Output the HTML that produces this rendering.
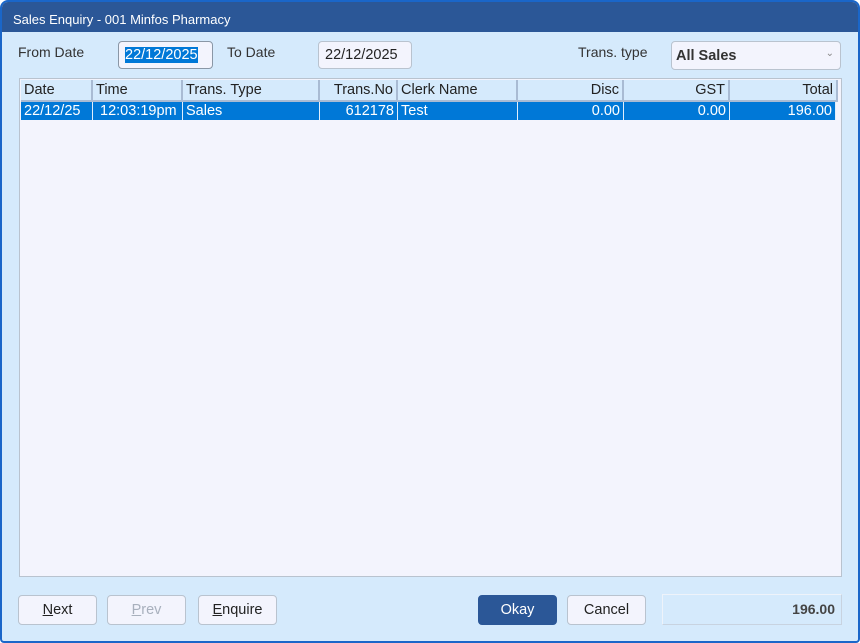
<!DOCTYPE html>
<html><head><style>
*{margin:0;padding:0;box-sizing:border-box}
body{width:860px;height:643px;background:#fff;font-family:"Liberation Sans",Arial,sans-serif;position:relative;overflow:hidden}
.win{position:absolute;left:0;top:0;width:860px;height:643px;border:2px solid #1a66c9;border-radius:8px 8px 4px 4px;background:#d5eafc;overflow:hidden}
.title{position:absolute;left:0;top:0;width:856px;height:30px;background:#2b5797;color:#fff;font-size:13px;padding:10px 0 0 11px}
.a{position:absolute}
.lbl{font-size:14px;color:#333}
.box{background:#f3f4fd;border:1px solid #b9c3cf;border-radius:4px;font-size:14.5px;color:#222}
.grid{left:17px;top:76px;width:823px;height:499px;background:#f3f4fd;border:1px solid #b9c3cf}
.hd,.rw{position:absolute;font-size:14.5px;height:19px;line-height:19px;white-space:nowrap;overflow:hidden;padding:0 3px}
.hd{top:1px;background:#d5eafc;border-right:2px solid #a9bbd3;border-bottom:2px solid #a9bbd3;color:#222;height:22px;line-height:21px}
.rw{top:23px;height:18px;line-height:18px;background:#0078d7;color:#fff;border-right:1px solid #e0eefc}
.r{text-align:right}
.btn{top:593px;width:79px;height:30px;background:#f3f4fd;border:1px solid #b9c3cf;border-radius:4px;font-size:14.5px;text-align:center;line-height:28px;color:#222}
</style></head><body>
<div class="win">
<div class="title">Sales Enquiry - 001 Minfos Pharmacy</div>
<div class="a lbl" style="left:16px;top:42px">From Date</div>
<div class="a box" style="left:116px;top:39px;width:95px;height:28px;border-color:#8a97a6;padding:5px 0 0 6px"><span style="background:#0078d7;color:#fff">22/12/2025</span></div>
<div class="a lbl" style="left:225px;top:42px">To Date</div>
<div class="a box" style="left:316px;top:39px;width:94px;height:28px;padding:5px 0 0 6px">22/12/2025</div>
<div class="a lbl" style="left:576px;top:42px">Trans. type</div>
<div class="a box" style="left:669px;top:39px;width:170px;height:29px;padding:6px 0 0 4px;font-weight:bold;color:#333">All Sales<span style="position:absolute;right:6px;top:6px;font-size:10px;color:#888;font-weight:normal">&#8964;</span></div>
<div class="a grid">
<div class="hd" style="left:1px;width:72px">Date</div>
<div class="hd" style="left:73px;width:90px">Time</div>
<div class="hd" style="left:163px;width:137px">Trans. Type</div>
<div class="hd r" style="left:300px;width:78px">Trans.No</div>
<div class="hd" style="left:378px;width:120px">Clerk Name</div>
<div class="hd r" style="left:498px;width:106px">Disc</div>
<div class="hd r" style="left:604px;width:106px">GST</div>
<div class="hd r" style="left:710px;width:108px">Total</div>
<div class="rw" style="left:1px;width:72px">22/12/25</div>
<div class="rw" style="left:73px;width:90px">&nbsp;12:03:19pm</div>
<div class="rw" style="left:163px;width:137px">Sales</div>
<div class="rw r" style="left:300px;width:78px">612178</div>
<div class="rw" style="left:378px;width:120px">Test</div>
<div class="rw r" style="left:498px;width:106px">0.00</div>
<div class="rw r" style="left:604px;width:106px">0.00</div>
<div class="rw r" style="left:710px;width:106px">196.00</div>
</div>
<div class="a btn" style="left:16px"><u>N</u>ext</div>
<div class="a btn" style="left:105px;color:#a8b0bd"><u>P</u>rev</div>
<div class="a btn" style="left:196px"><u>E</u>nquire</div>
<div class="a btn" style="left:476px;background:#2b5797;border-color:#2b5797;color:#fff">Okay</div>
<div class="a btn" style="left:565px">Cancel</div>
<div class="a" style="left:660px;top:592px;width:180px;height:31px;border:1px solid #eef3fa;border-right-color:#c8d3e0;border-bottom-color:#c8d3e0;background:#d5eafc;font-size:14px;font-weight:bold;color:#444;text-align:right;padding:6px 6px 0 0">196.00</div>
</div>
</body></html>
